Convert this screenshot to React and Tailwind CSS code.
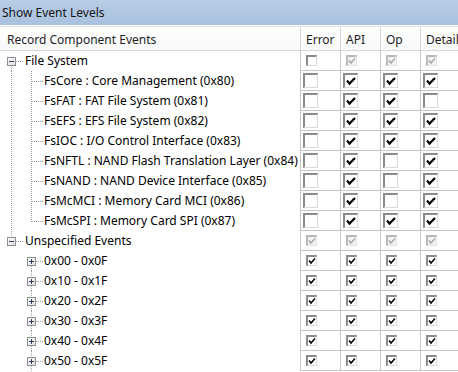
import React from "react";

const font = { fontFamily: '"Noto Sans", "Segoe UI", sans-serif' };

const rows = [
  { label: "File System", kind: "rootFirst", size: "sm", states: ["off", "dim", "dim", "dim"] },
  { label: "FsCore : Core Management (0x80)", kind: "child", size: "lg", states: ["off", "on", "on", "on"] },
  { label: "FsFAT : FAT File System (0x81)", kind: "child", size: "lg", states: ["off", "on", "on", "off"] },
  { label: "FsEFS : EFS File System (0x82)", kind: "child", size: "lg", states: ["off", "on", "on", "on"] },
  { label: "FsIOC : I/O Control Interface (0x83)", kind: "child", size: "lg", states: ["off", "on", "on", "on"] },
  { label: "FsNFTL : NAND Flash Translation Layer (0x84)", kind: "child", size: "lg", states: ["off", "on", "off", "on"] },
  { label: "FsNAND : NAND Device Interface (0x85)", kind: "child", size: "lg", states: ["off", "on", "off", "on"] },
  { label: "FsMcMCI : Memory Card MCI (0x86)", kind: "child", size: "lg", states: ["off", "on", "off", "on"] },
  { label: "FsMcSPI : Memory Card SPI (0x87)", kind: "childLast", size: "lg", states: ["off", "on", "on", "on"] },
  { label: "Unspecified Events", kind: "rootLast", size: "sm", states: ["dim", "dim", "dim", "dim"] },
  { label: "0x00 - 0x0F", kind: "subFirst", size: "sm", states: ["on", "on", "on", "on"] },
  { label: "0x10 - 0x1F", kind: "sub", size: "sm", states: ["on", "on", "on", "on"] },
  { label: "0x20 - 0x2F", kind: "sub", size: "sm", states: ["on", "on", "on", "on"] },
  { label: "0x30 - 0x3F", kind: "sub", size: "sm", states: ["on", "on", "on", "on"] },
  { label: "0x40 - 0x4F", kind: "sub", size: "sm", states: ["on", "on", "on", "on"] },
  { label: "0x50 - 0x5F", kind: "sub", size: "sm", states: ["on", "on", "on", "on"] },
];

const dot = { stroke: "#a0a0a0", strokeWidth: 1, strokeDasharray: "1 1" };

function Expander({ x, plus }) {
  return (
    <g>
      <defs>
        <linearGradient id="exp" x1="0" y1="0" x2="1" y2="1">
          <stop offset="0" stopColor="#ffffff" />
          <stop offset="1" stopColor="#dcdcdc" />
        </linearGradient>
      </defs>
      <rect x={x + 0.5} y={6.5} width={8} height={8} fill="url(#exp)" stroke="#8f8f8f" />
      <line x1={x + 2} y1={10.5} x2={x + 7} y2={10.5} stroke="#2f3d5c" />
      {plus && <line x1={x + 4.5} y1={8} x2={x + 4.5} y2={13} stroke="#2f3d5c" />}
    </g>
  );
}

function TreeLines({ kind }) {
  if (kind === "rootFirst" || kind === "rootLast") {
    return (
      <svg width="24" height="20" className="shrink-0">
        {kind === "rootFirst" && <line x1="11.5" y1="15" x2="11.5" y2="20" {...dot} />}
        {kind === "rootLast" && <line x1="11.5" y1="0" x2="11.5" y2="6" {...dot} />}
        <line x1="16" y1="10.5" x2="24" y2="10.5" {...dot} />
        <Expander x={7} />
      </svg>
    );
  }
  if (kind === "child" || kind === "childLast") {
    return (
      <svg width="44" height="20" className="shrink-0">
        <line x1="11.5" y1="0" x2="11.5" y2="20" {...dot} />
        <line x1="31.5" y1="0" x2="31.5" y2={kind === "childLast" ? 11 : 20} {...dot} />
        <line x1="32" y1="10.5" x2="44" y2="10.5" {...dot} />
      </svg>
    );
  }
  return (
    <svg width="44" height="20" className="shrink-0">
      {kind !== "subFirst" && <line x1="31.5" y1="0" x2="31.5" y2="6" {...dot} />}
      <line x1="31.5" y1="15" x2="31.5" y2="20" {...dot} />
      <line x1="36" y1="10.5" x2="44" y2="10.5" {...dot} />
      <Expander x={27} plus />
    </svg>
  );
}

function Check({ size, state }) {
  const big = size === "lg";
  const dim = state === "dim";
  const box = big
    ? "w-[15px] h-[15px] ml-[2px]"
    : "w-[11px] h-[11px] ml-[5px]";
  const edge = dim
    ? "border-t-2 border-l-2 border-[#b9b9b9] border-r border-b border-r-[#e4e4e4] border-b-[#e4e4e4] bg-[#f2f2f2]"
    : "border-t-2 border-l-2 border-[#8a8a8a] border-r border-b border-r-[#dadada] border-b-[#dadada] bg-white";
  return (
    <div className={`${box} ${edge} flex items-center justify-center`}>
      {state !== "off" &&
        (big ? (
          <svg width="12" height="12" viewBox="0 0 12 12">
            <path d="M2 5.5 L4.5 8.5 L10 3" fill="none" stroke="#000" strokeWidth="2.2" />
          </svg>
        ) : (
          <svg width="8" height="8" viewBox="0 0 8 8">
            <path d="M1 3.5 L3 6 L7 1.5" fill="none" stroke={dim ? "#a8a8a8" : "#000"} strokeWidth="1.5" />
          </svg>
        ))}
    </div>
  );
}

export default function App() {
  return (
    <div className="w-[458px] h-[372px] overflow-hidden bg-white text-[12px] text-black" style={font}>
      <div className="h-[25px] px-[2px] flex items-center bg-gradient-to-b from-[#b9cde5] to-[#a8c1de] text-[#151515]">
        Show Event Levels
      </div>
      <div className="h-px bg-white" />
      <div className="h-px bg-[#dfe3e8]" />
      <div className="h-[24px] flex border-b border-[#d5d5d5] bg-gradient-to-b from-white to-[#f7f8f9] text-[#1e1e1e]">
        <div className="w-[300px] shrink-0 pl-[7px] pt-[2px] flex items-center">Record Component Events</div>
        {["Error", "API", "Op", "Detail"].map((h) => (
          <div key={h} className="w-[40px] shrink-0 border-l border-[#d5d5d5] pl-[5px] pt-[2px] flex items-center">
            {h}
          </div>
        ))}
      </div>
      {rows.map((r) => (
        <div key={r.label} className="h-[20px] flex">
          <div className="w-[300px] shrink-0 flex items-center">
            <TreeLines kind={r.kind} />
            <span className={r.kind.startsWith("root") ? "ml-[1px] whitespace-nowrap" : "whitespace-nowrap"}>
              {r.label}
            </span>
          </div>
          {r.states.map((s, i) => (
            <div key={i} className="w-[40px] shrink-0 border-l border-b border-[#c6c6c6] flex items-center">
              <Check size={r.size} state={s} />
            </div>
          ))}
        </div>
      ))}
    </div>
  );
}
